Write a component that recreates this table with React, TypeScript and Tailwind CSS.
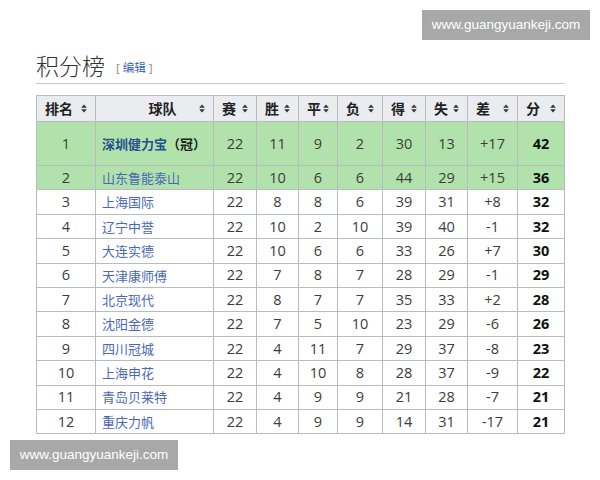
const rows = [
  { r: 1, team: "深圳健力宝", champ: true, p: 22, w: 11, d: 9, l: 2, gf: 30, ga: 13, diff: "+17", pts: 42 },
  { r: 2, team: "山东鲁能泰山", p: 22, w: 10, d: 6, l: 6, gf: 44, ga: 29, diff: "+15", pts: 36 },
  { r: 3, team: "上海国际", p: 22, w: 8, d: 8, l: 6, gf: 39, ga: 31, diff: "+8", pts: 32 },
  { r: 4, team: "辽宁中誉", p: 22, w: 10, d: 2, l: 10, gf: 39, ga: 40, diff: "-1", pts: 32 },
  { r: 5, team: "大连实德", p: 22, w: 10, d: 6, l: 6, gf: 33, ga: 26, diff: "+7", pts: 30 },
  { r: 6, team: "天津康师傅", p: 22, w: 7, d: 8, l: 7, gf: 28, ga: 29, diff: "-1", pts: 29 },
  { r: 7, team: "北京现代", p: 22, w: 8, d: 7, l: 7, gf: 35, ga: 33, diff: "+2", pts: 28 },
  { r: 8, team: "沈阳金德", p: 22, w: 7, d: 5, l: 10, gf: 23, ga: 29, diff: "-6", pts: 26 },
  { r: 9, team: "四川冠城", p: 22, w: 4, d: 11, l: 7, gf: 29, ga: 37, diff: "-8", pts: 23 },
  { r: 10, team: "上海申花", p: 22, w: 4, d: 10, l: 8, gf: 28, ga: 37, diff: "-9", pts: 22 },
  { r: 11, team: "青岛贝莱特", p: 22, w: 4, d: 9, l: 9, gf: 21, ga: 28, diff: "-7", pts: 21 },
  { r: 12, team: "重庆力帆", p: 22, w: 4, d: 9, l: 9, gf: 14, ga: 31, diff: "-17", pts: 21 },
];

const cols = [
  { label: "排名", w: "w-[59px]" },
  { label: "球队", w: "w-[118px]" },
  { label: "赛", w: "w-[43px]" },
  { label: "胜", w: "w-[42px]" },
  { label: "平", w: "w-[39px]" },
  { label: "负", w: "w-[45px]" },
  { label: "得", w: "w-[43px]" },
  { label: "失", w: "w-[42px]" },
  { label: "差", w: "w-[50px]" },
  { label: "分", w: "w-[47px]" },
];

function SortIcon() {
  return (
    <svg width="6" height="9" viewBox="0 0 6 9" className="shrink-0">
      <path d="M3 0.5 L5.8 3.7 L0.2 3.7 Z" fill="#333" />
      <path d="M3 8.5 L5.8 5.3 L0.2 5.3 Z" fill="#333" />
    </svg>
  );
}

export default function App() {
  const cell = "border border-[#b8bcc1] text-center";
  return (
    <div className="relative h-[480px] w-[600px] overflow-hidden bg-white font-['Open_Sans','Noto_Sans_CJK_SC',sans-serif] text-[#3c3c3c]">
      <div className="absolute right-[10px] top-[10px] flex h-[30px] w-[168px] items-center justify-center bg-[#a8a8a8] font-['Liberation_Sans',sans-serif] text-[13.5px] text-white">
        www.guangyuankeji.com
      </div>

      <div className="pl-[36px] pr-[35px] pt-[51px]">
        <div className="flex items-end gap-[11px] border-b border-[#c8c8c8] pb-[3px]">
          <h2 className="font-['Noto_Sans_CJK_SC',sans-serif] text-[23px] leading-[29px] font-light text-[#333]">积分榜</h2>
          <span className="mb-[4px] text-[11.5px] text-[#888]">
            [ <span className="text-[#3a63a8]">编辑</span> ]
          </span>
        </div>

        <table className="mt-[11px] border-collapse text-[14.5px]">
          <thead>
            <tr className="h-[26px] bg-[#eaecf0]">
              {cols.map((c, i) => (
                <th key={c.label} className={`${cell} ${c.w} px-[8px] font-['Noto_Sans_CJK_SC',sans-serif] text-[14px] font-bold text-[#222]`}>
                  <div className={`flex items-center justify-between ${i === 1 ? "pl-[22px]" : ""}`}>
                    <span className={i === 1 ? "flex-1 text-center" : ""}>{c.label}</span>
                    <SortIcon />
                  </div>
                </th>
              ))}
            </tr>
          </thead>
          <tbody>
            {rows.map((row) => {
              const green = row.r <= 2;
              return (
                <tr
                  key={row.r}
                  className={`${row.r === 1 ? "h-[44px]" : "h-[24.4px]"} ${green ? "bg-[#b2e2ab]" : "bg-white"}`}
                >
                  <td className={cell}>{row.r}</td>
                  <td className={`${cell} px-[6px] text-left font-['Noto_Sans_CJK_SC',sans-serif] text-[13px]`}>
                    {row.champ ? (
                      <span className="font-bold">
                        <span className="text-[#28508f]">{row.team}</span>
                        <span className="text-[#222]">（冠）</span>
                      </span>
                    ) : (
                      <span className="text-[#4a68b8]">{row.team}</span>
                    )}
                  </td>
                  <td className={cell}>{row.p}</td>
                  <td className={cell}>{row.w}</td>
                  <td className={cell}>{row.d}</td>
                  <td className={cell}>{row.l}</td>
                  <td className={cell}>{row.gf}</td>
                  <td className={cell}>{row.ga}</td>
                  <td className={cell}>{row.diff}</td>
                  <td className={`${cell} font-bold text-[#111]`}>{row.pts}</td>
                </tr>
              );
            })}
          </tbody>
        </table>
      </div>

      <div className="absolute left-[10px] top-[440px] flex h-[30px] w-[168px] items-center justify-center bg-[#a8a8a8] font-['Liberation_Sans',sans-serif] text-[13.5px] text-white">
        www.guangyuankeji.com
      </div>
    </div>
  );
}
